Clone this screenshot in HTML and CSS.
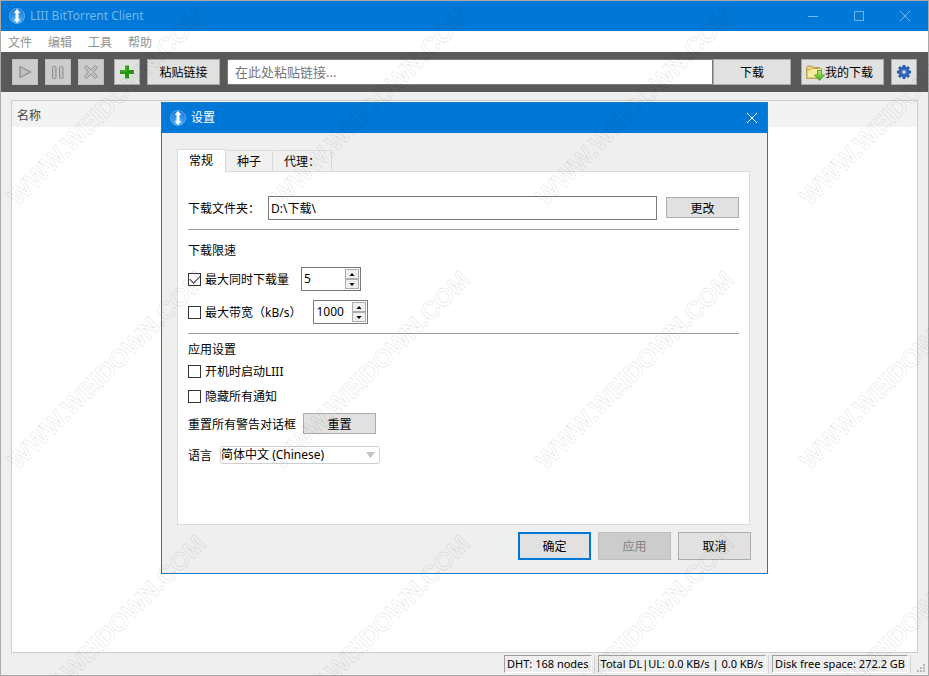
FILE: index.html
```html
<!DOCTYPE html>
<html lang="zh-CN">
<head>
    <meta charset="utf-8">
    <title>LIII BitTorrent Client</title>
    <meta name="viewport" content="width=device-width, initial-scale=1">
    <link rel="stylesheet" href="styles.css">
</head>
<body>

    <svg class="defs" width="0" height="0" aria-hidden="true">
        <defs>
            <radialGradient id="ball" cx="50%" cy="80%" r="75%">
                <stop offset="0" stop-color="#55bdff"/>
                <stop offset="1" stop-color="#1b74d8"/>
            </radialGradient>
            <linearGradient id="arrowGreen" x1="0" y1="0" x2="0" y2="1">
                <stop offset="0" stop-color="#b4ee6c"/>
                <stop offset="1" stop-color="#3ea51e"/>
            </linearGradient>
            <symbol id="logo" viewBox="0 0 16 16">
                <circle cx="8" cy="8" r="7.5" fill="url(#ball)" stroke="#58aef2"/>
                <path d="M8 1 L11.5 4.800 H9.500 V11.200 H11.500 L8 15 L4.500 11.200 H6.500 V4.800 H4.500 Z" fill="#fff"/>
            </symbol>
        </defs>
    </svg>

    <div class="window">
        <header class="titlebar">
            <svg class="logo"><use href="#logo"/></svg>
            <span class="title">LIII BitTorrent Client</span>
            <div class="winButtons">
                <button aria-label="Minimize"><svg width="12" height="12"><path d="M1 6.500H11"/></svg></button>
                <button aria-label="Maximize"><svg width="12" height="12"><path d="M1.500 1.500H10.500V10.500H1.500Z"/></svg></button>
                <button aria-label="Close"><svg width="12" height="12"><path d="M1 1L11 11M11 1L1 11"/></svg></button>
            </div>
        </header>

        <nav class="menu">
            <button>文件</button>
            <button>编辑</button>
            <button>工具</button>
            <button>帮助</button>
        </nav>

        <div class="toolbar">
            <div class="group">
                <button class="btn icon" disabled aria-label="Start">
                    <svg width="16" height="16"><path d="M3 2.500L13.500 8L3 13.500Z" fill="#c2c2c2" stroke="#8e8e8e" stroke-width="1.300"/></svg>
                </button>
                <button class="btn icon" disabled aria-label="Pause">
                    <svg width="16" height="16" fill="#c2c2c2" stroke="#8e8e8e"><rect x="2.500" y="2.500" width="3.500" height="12" rx="1"/><rect x="9.500" y="2.500" width="3.500" height="12" rx="1"/></svg>
                </button>
                <button class="btn icon" disabled aria-label="Remove">
                    <svg width="16" height="16"><path d="M3.500 1.500L8 6L12.500 1.500L14.500 3.500L10.500 8L14.500 12.500L12.500 14.500L8 10L3.500 14.500L1.500 12.500L5.500 8L1.500 3.500Z" fill="#c4c4c4" stroke="#8e8e8e" stroke-linejoin="round"/></svg>
                </button>
            </div>
            <div class="group links">
                <button class="btn icon" aria-label="Add">
                    <svg width="16" height="16"><path d="M6 1.500H10V6H15V10H10V14.500H6V10H1V6H6Z" fill="#259a12"/><path d="M7 2V7H2" fill="none" stroke="#52b93b"/></svg>
                </button>
                <button class="btn paste">粘贴链接</button>
                <div class="linkBox">
                    <input type="text" placeholder="在此处粘贴链接..." aria-label="粘贴链接">
                    <button class="btn download">下载</button>
                </div>
            </div>
            <button class="btn mine">
                <svg width="20" height="18">
                    <path d="M1.500 14.500V3.500L2.500 2H7L8.500 3.500H14.500V14.500Z" fill="#e6d678" stroke="#b49b47"/>
                    <path d="M2 14V6H5L6.500 4.500H16.500V14Z" fill="#f5eba0" stroke="#c2ac57"/>
                    <path d="M12.500 6.500H16.500V11H19.500L14.500 16.500L9.500 11H12.500Z" fill="url(#arrowGreen)" stroke="#58a537"/>
                </svg>
                我的下载
            </button>
            <button class="btn icon" aria-label="设置">
                <svg width="16" height="16" viewBox="0 0 16 16">
                    <g fill="#2459b3">
                        <rect x="6.500" y="1" width="3" height="14"/>
                        <rect x="6.500" y="1" width="3" height="14" transform="rotate(45 8 8)"/>
                        <rect x="6.500" y="1" width="3" height="14" transform="rotate(90 8 8)"/>
                        <rect x="6.500" y="1" width="3" height="14" transform="rotate(135 8 8)"/>
                        <circle cx="8" cy="8" r="5"/>
                    </g>
                    <circle cx="8" cy="8" r="3" fill="none" stroke="#477bd0"/>
                    <circle cx="8" cy="8" r="1.800" fill="#e1e1e1"/>
                </svg>
            </button>
        </div>

        <main class="content">
            <div class="list">
                <div class="listHead">名称</div>
            </div>
        </main>

        <footer class="status">
            <span class="cell">DHT: 168 nodes</span>
            <span class="cell">Total DL|UL: 0.0 KB/s | 0.0 KB/s</span>
            <span class="cell">Disk free space: 272.2 GB</span>
            <svg class="grip" width="9" height="9" fill="#b8b8b8"><path d="M6 0h2v2h-2zM3 3h2v2h-2zM6 3h2v2h-2zM0 6h2v2h-2zM3 6h2v2h-2zM6 6h2v2h-2z"/></svg>
        </footer>

        <section class="dialog" role="dialog" aria-labelledby="dlgTitle">
            <header class="dlgTitlebar">
                <svg class="logo"><use href="#logo"/></svg>
                <span class="title" id="dlgTitle">设置</span>
                <button aria-label="Close"><svg width="12" height="12"><path d="M1 1L11 11M11 1L1 11"/></svg></button>
            </header>

            <div class="tabs" role="tablist">
                <button class="tab active" role="tab" aria-selected="true">常规</button>
                <button class="tab" role="tab">种子</button>
                <button class="tab" role="tab">代理：</button>
            </div>

            <div class="panel" role="tabpanel">
                <div class="row folder">
                    <label for="folder">下载文件夹：</label>
                    <input type="text" id="folder" value="D:\下载\">
                    <button class="btn small">更改</button>
                </div>
                <hr>
                <div class="limits">
                    <h2>下载限速</h2>
                    <div class="row limit">
                        <input type="checkbox" id="maxDownloads" checked>
                        <label for="maxDownloads">最大同时下载量</label>
                        <div class="spin">
                            <input type="number" value="5" aria-label="最大同时下载量">
                            <div class="arrows">
                                <button aria-label="Up"><svg viewBox="0 0 7 4"><path d="M0 4L3.500 0L7 4Z"/></svg></button>
                                <button aria-label="Down"><svg viewBox="0 0 7 4"><path d="M0 0L3.500 4L7 0Z"/></svg></button>
                            </div>
                        </div>
                    </div>
                    <div class="row limit">
                        <input type="checkbox" id="maxBand">
                        <label for="maxBand">最大带宽（kB/s）</label>
                        <div class="spin band">
                            <input type="number" value="1000" aria-label="最大带宽（kB/s）">
                            <div class="arrows">
                                <button aria-label="Up"><svg viewBox="0 0 7 4"><path d="M0 4L3.500 0L7 4Z"/></svg></button>
                                <button aria-label="Down"><svg viewBox="0 0 7 4"><path d="M0 0L3.500 4L7 0Z"/></svg></button>
                            </div>
                        </div>
                    </div>
                </div>
                <hr>
                <div class="appSettings">
                    <h2>应用设置</h2>
                    <div class="row check">
                        <input type="checkbox" id="autostart">
                        <label for="autostart">开机时启动LIII</label>
                    </div>
                    <div class="row check">
                        <input type="checkbox" id="hideNotes">
                        <label for="hideNotes">隐藏所有通知</label>
                    </div>
                    <div class="row reset">
                        <span>重置所有警告对话框</span>
                        <button class="btn small">重置</button>
                    </div>
                    <div class="row lang">
                        <label for="lang">语言</label>
                        <div class="selectBox">
                            <select id="lang">
                                <option>简体中文 (Chinese)</option>
                            </select>
                            <svg width="9" height="6"><path d="M0 0H9L4.500 6Z" fill="#c3c3c3"/></svg>
                        </div>
                    </div>
                </div>
            </div>

            <div class="dlgButtons">
                <button class="btn default">确定</button>
                <button class="btn" disabled>应用</button>
                <button class="btn">取消</button>
            </div>
        </section>
    </div>

    <svg class="watermark" aria-hidden="true">
        <defs>
            <text id="mark" transform="rotate(-45)">WWW.WEIDOWN.COM</text>
            <g id="markRow">
                <use href="#mark" x="18" y="0"/>
                <use href="#mark" x="282" y="0"/>
                <use href="#mark" x="546" y="0"/>
                <use href="#mark" x="810" y="0"/>
            </g>
        </defs>
        <use href="#markRow" y="207"/>
        <use href="#markRow" y="471"/>
        <use href="#markRow" y="735"/>
    </svg>

</body>
</html>
```
FILE: styles.css
```css
* {
    box-sizing: border-box;
}

body {
    margin: 0;
    font-family: "Noto Sans", "Noto Sans CJK SC", sans-serif;
    font-size: 12px;
    line-height: 16px;
    color: #000;
}

button, input, select {
    font: inherit;
    color: inherit;
    margin: 0;
    padding: 0;
}

svg {
    display: block;
    flex: none;
}

.defs {
    position: absolute;
}

.window {
    position: relative;
    display: flex;
    flex-direction: column;
    min-height: 100vh;
    border: 1px solid #a9a9a9;
    background: #efefef;
}

/* title bars */

.titlebar, .dlgTitlebar {
    display: flex;
    align-items: center;
    height: 30px;
    padding-left: 8px;
    background: #0078d7;
    color: #fff;
}

.titlebar {
    color: #77b7ea;
}

.logo {
    width: 16px;
    height: 16px;
}

.title {
    flex: 1;
    margin-left: 5px;
}

.winButtons {
    display: flex;
}

.titlebar button, .dlgTitlebar button {
    display: flex;
    align-items: center;
    justify-content: center;
    width: 46px;
    height: 30px;
    border: 0;
    background: none;
}

.dlgTitlebar button {
    width: 30px;
}

.titlebar button path, .dlgTitlebar button path {
    fill: none;
    stroke: currentColor;
}

.menu {
    display: flex;
    gap: 16px;
    height: 21px;
    padding-left: 7px;
    background: #fff;
}

.menu button {
    padding-top: 2px;
    border: 0;
    background: none;
    color: #929292;
}

/* toolbar */

.toolbar {
    display: flex;
    align-items: center;
    height: 40px;
    padding: 0 11px;
    background: #595959;
}

.group {
    display: flex;
    align-items: center;
    gap: 7px;
}

.links {
    flex: 1;
    margin: 0 10px;
}

.btn {
    display: flex;
    align-items: center;
    justify-content: center;
    width: 73px;
    height: 26px;
    padding-top: 2px;
    border: 1px solid #adadad;
    background: #e1e1e1;
}

.btn:disabled {
    background: #cccccc;
    border-color: #bfbfbf;
    color: #838383;
}

.icon {
    width: 26px;
    padding-top: 0;
}

.linkBox {
    display: flex;
    flex: 1;
}

.linkBox input {
    flex: 1;
    min-width: 0;
    height: 26px;
    padding: 0 7px;
    border: 1px solid #7a7a7a;
    border-radius: 2px 0 0 2px;
    font-size: 13px;
}

.linkBox input::placeholder {
    color: #777;
    opacity: 1;
}

.download {
    width: 78px;
}

.mine {
    justify-content: flex-start;
    width: 83px;
    margin-right: 7px;
    padding-left: 3px;
}

.content {
    display: flex;
    flex: 1;
    padding: 8px 10px 0;
}

.list {
    flex: 1;
    border: 1px solid #cdcdcd;
    background: #fff;
}

.listHead {
    height: 26px;
    padding: 7px 5px;
    background: #f3f3f3;
    color: #444;
}

/* status bar */

.status {
    display: flex;
    align-items: center;
    justify-content: flex-end;
    gap: 6px;
    height: 22px;
    padding-right: 2px;
    font-size: 11px;
}

.cell {
    position: relative;
    height: 18px;
    padding: 0 2px;
    border: 1px solid #a0a0a0;
    border-right-color: #fff;
    border-bottom-color: #fff;
    white-space: nowrap;
}

.cell::after {
    content: "";
    position: absolute;
    top: -1px;
    right: -4px;
    width: 1px;
    height: 18px;
    background: #d5d5d5;
}

.grip {
    align-self: flex-end;
    margin: 0 0 2px 3px;
}

/* settings dialog */

.dialog {
    position: absolute;
    top: 101px;
    left: 160px;
    right: 160px;
    border: 1px solid #1b7cc9;
    background: #efefef;
    padding-bottom: 13px;
}

.tabs {
    display: flex;
    align-items: flex-end;
    margin: 16px 15px 0;
}

.tab {
    height: 21px;
    padding: 2px 11px 0;
    border: 1px solid #d9d9d9;
    border-width: 1px 1px 0 0;
    background: #f0f0f0;
}

.tab.active {
    height: 23px;
    padding: 0 12px 0 11px;
    margin-bottom: -1px;
    border-left-width: 1px;
    background: #fff;
    z-index: 1;
}

.panel {
    height: 354px;
    margin: 0 17px 0 15px;
    padding: 23px 10px;
    border: 1px solid #dcdcdc;
    background: #fff;
}

.row {
    display: flex;
    align-items: center;
}

.row label, .row span {
    padding-top: 2px;
}

.folder {
    height: 25px;
}

.folder input {
    flex: 1;
    min-width: 0;
    height: 24px;
    margin: 0 9px 0 8px;
    padding: 0 2px;
    border: 1px solid #7a7a7a;
}

.small {
    height: 21px;
}

.panel hr {
    height: 1px;
    margin: 9px 0 0;
    border: 0;
    background: #a0a0a0;
}

.panel h2 {
    margin: 0;
    font-size: 12px;
    font-weight: normal;
}

.limits h2 {
    padding: 13px 0 8px;
}

.appSettings h2 {
    padding: 8px 0 5px;
}

input[type="checkbox"] {
    appearance: none;
    width: 13px;
    height: 13px;
    margin-right: 4px;
    border: 1px solid #333;
    background: #fff;
}

input[type="checkbox"]:checked::before {
    content: "";
    display: block;
    width: 9px;
    height: 5px;
    margin: 2px 1px;
    border: solid #333;
    border-width: 0 0 1px 1px;
    transform: translateY(-1px) rotate(-45deg);
}

.limit + .limit {
    margin-top: 9px;
}

.spin {
    display: flex;
    width: 60px;
    height: 24px;
    margin-left: 12px;
    padding: 1px;
    border: 1px solid #7a7a7a;
}

.band {
    width: 55px;
}

.spin input {
    flex: 1;
    min-width: 0;
    padding-left: 1px;
    border: 0;
    appearance: textfield;
}

.spin input::-webkit-inner-spin-button {
    display: none;
}

.arrows {
    display: flex;
    flex-direction: column;
    width: 14px;
}

.arrows button {
    display: flex;
    flex: 1;
    align-items: center;
    justify-content: center;
    border: 1px solid #adadad;
    background: #f0f0f0;
}

.arrows svg {
    width: 6px;
    height: 3px;
}

.check {
    height: 16px;
    margin-bottom: 9px;
}

.reset {
    gap: 7px;
}

.lang {
    gap: 8px;
    margin-top: 12px;
    height: 18px;
}

.selectBox {
    position: relative;
    width: 160px;
}

.selectBox select {
    appearance: none;
    display: block;
    width: 100%;
    height: 18px;
    border: 1px solid #cfcfcf;
    border-radius: 3px;
    background: #fff;
}

.selectBox svg {
    position: absolute;
    top: 6px;
    right: 5px;
    pointer-events: none;
}

.dlgButtons {
    display: flex;
    justify-content: flex-end;
    gap: 7px;
    margin: 7px 16px 0;
}

.dlgButtons .btn {
    height: 28px;
}

.dlgButtons .default {
    border: 2px solid #0078d7;
}

.watermark {
    position: absolute;
    top: 0;
    left: 0;
    width: 100%;
    height: 100%;
    pointer-events: none;
    font-family: "Liberation Sans", sans-serif;
    font-size: 25px;
    font-weight: bold;
    fill: none;
    stroke: #000;
    stroke-opacity: 0.09;
    stroke-width: 1px;
    stroke-linejoin: round;
}
```
